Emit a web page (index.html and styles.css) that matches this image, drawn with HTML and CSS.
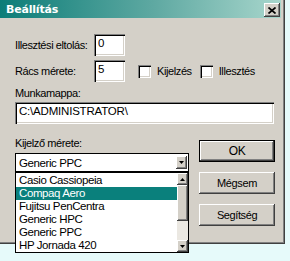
FILE: index.html
```html
<!DOCTYPE html>
<html lang="hu">
<head>
    <meta charset="UTF-8">
    <title>Beállítás</title>
    <link rel="stylesheet" href="styles.css">
</head>
<body>
    <div class="window">
        <div class="titlebar">
            <span class="title">Beállítás</span>
            <span class="close-btn">
                <svg width="8" height="7" viewBox="0 0 8 7"><path d="M0.5 0.5L7.5 6.5M7.5 0.5L0.5 6.5" stroke="#000" stroke-width="1.7"/></svg>
            </span>
        </div>

        <div class="content">
            <div class="row">
                <span class="field-label">Illesztési eltolás:</span>
                <div class="textbox small">0</div>
            </div>
            <div class="row">
                <span class="field-label">Rács mérete:</span>
                <div class="textbox small">5</div>
                <span class="checkbox first"></span>
                <span class="check-label">Kijelzés</span>
                <span class="checkbox second"></span>
                <span class="check-label">Illesztés</span>
            </div>

            <div class="caption">Munkamappa:</div>
            <div class="textbox wide">C:\ADMINISTRATOR\</div>

            <div class="bottom">
                <div class="combo-col">
                    <div class="caption">Kijelző mérete:</div>
                    <div class="combo">
                        <span class="combo-text">Generic PPC</span>
                        <span class="arrow-btn combo-arrow">
                            <svg width="5" height="3" viewBox="0 0 5 3"><path d="M0 0h5L2.5 3z" fill="#000"/></svg>
                        </span>

                        <!-- lenyilo lista -->
                        <div class="dropdown">
                            <ul class="items">
                                <li>Casio Cassiopeia</li>
                                <li class="selected">Compaq Aero</li>
                                <li>Fujitsu PenCentra</li>
                                <li>Generic HPC</li>
                                <li>Generic PPC</li>
                                <li>HP Jornada 420</li>
                            </ul>
                            <div class="scrollbar">
                                <span class="arrow-btn">
                                    <svg width="5" height="3" viewBox="0 0 5 3"><path d="M0 3h5L2.5 0z" fill="#000"/></svg>
                                </span>
                                <span class="thumb"></span>
                                <span class="track"></span>
                                <span class="arrow-btn">
                                    <svg width="5" height="3" viewBox="0 0 5 3"><path d="M0 0h5L2.5 3z" fill="#000"/></svg>
                                </span>
                            </div>
                        </div>
                    </div>
                </div>

                <div class="buttons">
                    <div class="btn default">OK</div>
                    <div class="btn">Mégsem</div>
                    <div class="btn">Segítség</div>
                </div>
            </div>
        </div>
    </div>
</body>
</html>
```

FILE: styles.css
```css
html {
    background-color: #e6fafa;
}

body {
    margin: 0;
    min-height: 261px;
    font-family: "Liberation Sans", Arial, sans-serif;
    font-size: 11px;
    letter-spacing: -0.4px;
    color: #000;
}

.window {
    width: 284px;
    height: 243px;
    background-color: #d4d0c8;
    border-right: 1px solid #404040;
    border-bottom: 1px solid #404040;
    box-shadow: inset -1px -1px 0 #808080;
    box-sizing: content-box;
}

.titlebar {
    height: 18px;
    margin-right: 3px;
    padding-left: 6px;
    display: flex;
    align-items: center;
    justify-content: space-between;
    background: linear-gradient(to right, #0c7d78, #5fa9a2 55%, #a8d6cc);
}

.title {
    font-family: "DejaVu Sans", Verdana, sans-serif;
    font-weight: bold;
    font-size: 11px;
    letter-spacing: -0.2px;
    color: #fff;
}

.close-btn {
    width: 16px;
    height: 14px;
    margin-right: 1px;
    margin-top: 2px;
    display: flex;
    align-items: center;
    justify-content: center;
    background-color: #d4d0c8;
    box-shadow: inset -1px -1px 0 #404040, inset 1px 1px 0 #fff, inset -2px -2px 0 #808080;
}

.content {
    padding: 16px 0 0 15px;
}

.row {
    display: flex;
    align-items: center;
    height: 22px;
    margin-bottom: 4px;
}

.field-label {
    width: 79px;
}

.textbox {
    height: 22px;
    box-sizing: border-box;
    padding: 3px 0 0 4px;
    background-color: #fff;
    box-shadow: inset 1px 1px 0 #808080, inset 2px 2px 0 #000, inset -1px -1px 0 #fff, inset -2px -2px 0 #d4d0c8;
    font-size: 11.5px;
}

.textbox.small {
    width: 31px;
}

.textbox.wide {
    width: 259px;
    letter-spacing: -0.2px;
}

.checkbox {
    width: 13px;
    height: 13px;
    box-sizing: border-box;
    background-color: #fff;
    box-shadow: inset 1px 1px 0 #808080, inset 2px 2px 0 #000, inset -1px -1px 0 #fff, inset -2px -2px 0 #d4d0c8;
    margin-right: 6px;
}

.checkbox.first {
    margin-left: 13px;
}

.checkbox.second {
    margin-left: 8px;
}

.caption {
    line-height: 14px;
    margin: 3px 0 2px;
}

.bottom {
    display: flex;
    gap: 10px;
    margin-top: 13px;
}

.combo-col .caption {
    margin: 0 0 3px;
    line-height: 13px;
}

.combo {
    position: relative;
    width: 174px;
    height: 19px;
    box-sizing: border-box;
    border: 1px solid #000;
    background-color: #fff;
    display: flex;
    align-items: center;
    justify-content: space-between;
    padding-left: 3px;
}

.combo-text {
    font-size: 11.5px;
}

.arrow-btn {
    width: 11px;
    height: 12px;
    display: flex;
    align-items: center;
    justify-content: center;
    background-color: #d4d0c8;
    box-shadow: inset -1px -1px 0 #404040, inset 1px 1px 0 #fff, inset -2px -2px 0 #808080;
}

.combo-arrow {
    height: 13px;
    margin-right: 1px;
}

.dropdown {
    position: absolute;
    left: -1px;
    top: 18px;
    width: 174px;
    height: 81px;
    box-sizing: border-box;
    border: 1px solid #000;
    background-color: #fff;
    display: flex;
    z-index: 2;
}

.items {
    list-style: none;
    margin: 0;
    padding: 1px 0 0;
    flex: 1;
}

.items li {
    height: 13px;
    line-height: 13px;
    padding-left: 3px;
    font-size: 11.5px;
}

.items li.selected {
    background-color: #0a807c;
    color: #fff;
}

.scrollbar {
    width: 11px;
    display: flex;
    flex-direction: column;
}

.thumb {
    height: 36px;
    background-color: #d4d0c8;
    box-shadow: inset -1px -1px 0 #404040, inset 1px 1px 0 #fff, inset -2px -2px 0 #808080;
}

.track {
    flex: 1;
    background-color: #ebe8e2;
}

.buttons {
    display: flex;
    flex-direction: column;
    gap: 10px;
    margin-top: 3px;
}

.btn {
    width: 76px;
    height: 22px;
    box-sizing: border-box;
    display: flex;
    align-items: center;
    justify-content: center;
    background-color: #d4d0c8;
    box-shadow: inset -1px -1px 0 #404040, inset 1px 1px 0 #fff, inset -2px -2px 0 #808080;
}

.btn.default {
    border: 1px solid #000;
    font-size: 12px;
}
```
